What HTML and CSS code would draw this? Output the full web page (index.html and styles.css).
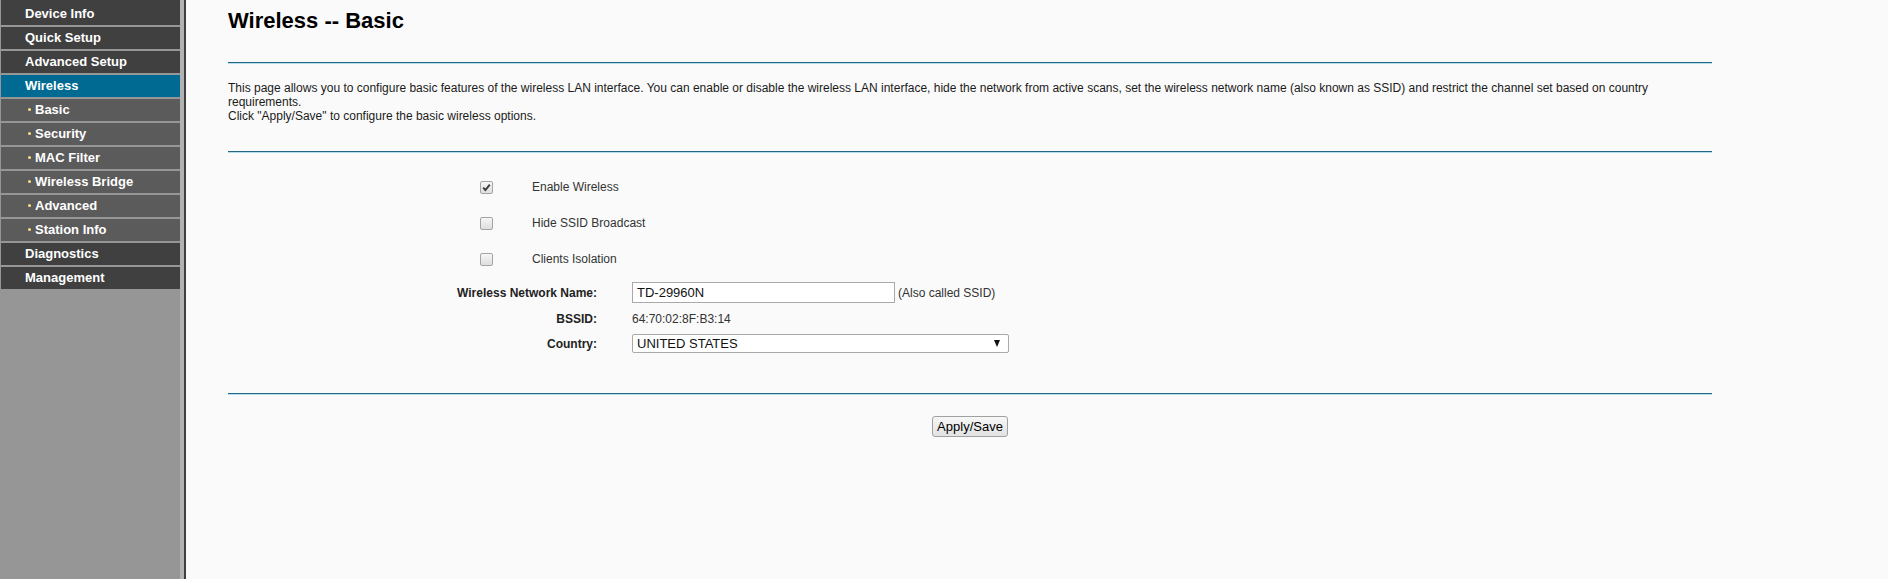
FILE: index.html
```html
<!DOCTYPE html>
<html lang="en">
<head>
  <meta charset="UTF-8">
  <title>Wireless -- Basic</title>
  <link rel="stylesheet" href="styles.css">
</head>
<body>
  <div class="page">
    <div class="sidebar">
      <ul class="menu">
        <li class="item first">Device Info</li>
        <li class="item">Quick Setup</li>
        <li class="item">Advanced Setup</li>
        <li class="item active">Wireless</li>
        <li class="item sub"><span class="dot"></span>Basic</li>
        <li class="item sub"><span class="dot"></span>Security</li>
        <li class="item sub"><span class="dot"></span>MAC Filter</li>
        <li class="item sub"><span class="dot"></span>Wireless Bridge</li>
        <li class="item sub"><span class="dot"></span>Advanced</li>
        <li class="item sub"><span class="dot"></span>Station Info</li>
        <li class="item">Diagnostics</li>
        <li class="item">Management</li>
      </ul>
    </div>

    <div class="main">
      <h1 class="title">Wireless -- Basic</h1>
      <div class="rule"></div>
      <p class="intro">This page allows you to configure basic features of the wireless LAN interface. You can enable or disable the wireless LAN interface, hide the network from active scans, set the wireless network name (also known as SSID) and restrict the channel set based on country requirements.<br>Click "Apply/Save" to configure the basic wireless options.</p>
      <div class="rule"></div>

      <div class="checks">
        <div class="check-row">
          <span class="box">
            <svg width="11" height="11" viewBox="0 0 11 11"><path d="M2.2 5.6 L4.4 8 L8.8 2.6" fill="none" stroke="#3a3a3a" stroke-width="1.9"/></svg>
          </span>
          <span class="check-label">Enable Wireless</span>
        </div>
        <div class="check-row">
          <span class="box"></span>
          <span class="check-label">Hide SSID Broadcast</span>
        </div>
        <div class="check-row">
          <span class="box"></span>
          <span class="check-label">Clients Isolation</span>
        </div>
      </div>

      <div class="fields">
        <div class="field name-row">
          <span class="field-label">Wireless Network Name:</span>
          <span class="field-value">
            <span class="text-input">TD-29960N</span>
            <span class="hint">(Also called SSID)</span>
          </span>
        </div>
        <div class="field bssid-row">
          <span class="field-label">BSSID:</span>
          <span class="field-value">64:70:02:8F:B3:14</span>
        </div>
        <div class="field country-row">
          <span class="field-label">Country:</span>
          <span class="field-value">
            <span class="select">UNITED STATES<span class="arrow"></span></span>
          </span>
        </div>
      </div>

      <div class="rule last"></div>
      <div class="actions">
        <button class="btn">Apply/Save</button>
      </div>
    </div>
  </div>
</body>
</html>
```

FILE: styles.css
```css
* {
  box-sizing: border-box;
}
body {
  margin: 0;
  font-family: "Liberation Sans", Arial, sans-serif;
  background: #fafafa;
}
.page {
  display: flex;
  height: 579px;
}

/* left menu */
.sidebar {
  width: 184px;
  background: #969696;
  border-right: 4px solid #b2b2b2;
  flex-shrink: 0;
}
.menu {
  list-style: none;
  margin: 0;
  padding: 0;
}
.item {
  margin: 0 0 2px 1px;
  height: 22px;
  line-height: 22px;
  padding-left: 24px;
  background: #404040;
  color: #fff;
  font-size: 13px;
  font-weight: bold;
  white-space: nowrap;
}
.item.first {
  height: 25px;
  padding-top: 3px;
}
.item.active {
  background: #006a93;
}
.item.sub {
  background: #5b5b5b;
  padding-left: 27px;
  display: flex;
  align-items: center;
}
.dot {
  width: 3px;
  height: 3px;
  border-radius: 50%;
  background: #ffdf80;
  margin-right: 4px;
  margin-top: -1px;
}

/* content */
.main {
  border-left: 2px solid #3e3e3e;
  padding-left: 42px;
  flex: 1;
}
.main > * {
  width: 1484px;
}
.title {
  margin: 0;
  padding-top: 8px;
  font-size: 22px;
  line-height: 25px;
  color: #000;
}
.rule {
  margin-top: 29px;
  border-top: 1px solid #236985;
  border-bottom: 1px solid #b3dcec;
}
.intro {
  margin: 17px 0 28px;
  font-size: 12px;
  line-height: 14px;
  color: #1a1a1a;
}
.intro + .rule {
  margin-top: 0;
}

.checks {
  margin-top: 16px;
  padding-left: 252px;
}
.check-row {
  height: 36px;
  display: flex;
  align-items: center;
}
.box {
  width: 13px;
  height: 13px;
  border: 1px solid #a4a4a4;
  border-radius: 2px;
  background: linear-gradient(#f6f6f6, #dedede);
  display: flex;
  align-items: center;
  justify-content: center;
}
.check-label {
  margin-left: 39px;
  font-size: 12px;
  color: #333;
}

.fields {
  margin-top: 5px;
  font-size: 12px;
  color: #333;
}
.field {
  display: grid;
  grid-template-columns: 369px 1fr;
  column-gap: 35px;
  align-items: center;
}
.field-label {
  text-align: right;
  font-weight: bold;
  color: #222;
}
.field-value {
  display: flex;
  align-items: center;
}
.name-row {
  height: 21px;
}
.bssid-row {
  margin-top: 4px;
  height: 24px;
}
.country-row {
  margin-top: 3px;
  height: 19px;
}
.text-input {
  width: 263px;
  height: 21px;
  border: 1px solid #a9a9a9;
  background: #fff;
  padding-left: 4px;
  font-size: 13px;
  line-height: 19px;
  color: #111;
}
.hint {
  margin-left: 3px;
}
.select {
  width: 377px;
  height: 19px;
  border: 1px solid #a9a9a9;
  border-radius: 2px;
  background: #fff;
  padding: 0 8px 0 4px;
  font-size: 13px;
  line-height: 17px;
  color: #111;
  display: flex;
  align-items: center;
  justify-content: space-between;
}
.arrow {
  width: 0;
  height: 0;
  border-left: 3.5px solid transparent;
  border-right: 3.5px solid transparent;
  border-top: 7px solid #111;
}

.rule.last {
  margin-top: 40px;
}
.actions {
  margin-top: 21px;
  text-align: center;
}
.btn {
  width: 76px;
  height: 21px;
  padding: 0;
  border: 1px solid #a0a0a0;
  border-radius: 3px;
  background: linear-gradient(#f7f7f7, #e2e2e2);
  font-family: "Liberation Sans", Arial, sans-serif;
  font-size: 13px;
  color: #000;
}
```
